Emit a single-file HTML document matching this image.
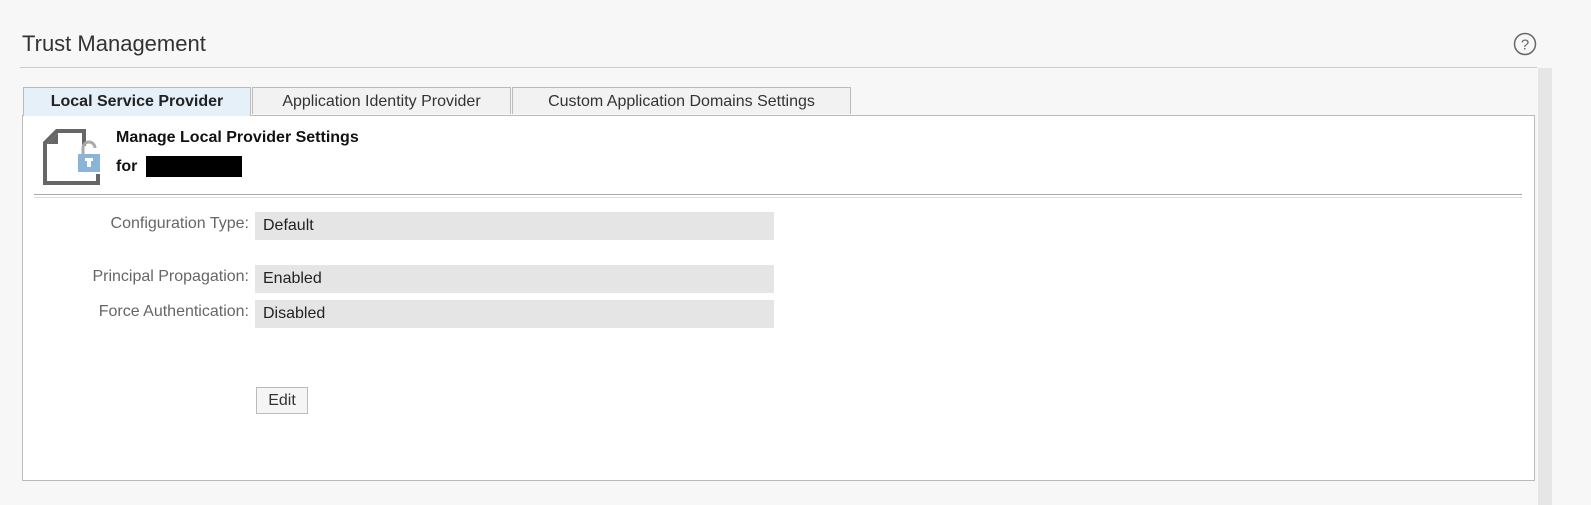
<!DOCTYPE html>
<html><head><style>
body{margin:0;width:1591px;height:505px;background:#f7f7f7;font-family:"Liberation Sans",Arial,sans-serif;position:relative;overflow:hidden}
.a{position:absolute}
.title{left:22px;top:31px;font-size:22px;color:#333}
.hr{left:20px;top:67px;width:1517px;height:1px;background:#ccc}
.scroll{left:1538px;top:68px;width:14px;height:437px;background:#e6e6e6}
.tab{top:87px;height:27px;border:1px solid #bbb;border-bottom:none;background:#f2f2f2;font-size:16px;color:#333;line-height:28px;text-align:center;box-sizing:border-box}
.panel{left:22px;top:115px;width:1513px;height:366px;background:#fff;border:1px solid #bbb;box-sizing:border-box}
.lbl{font-size:16px;color:#666;text-align:right;width:230px;left:19px}
.val{left:255px;width:519px;height:28px;background:#e5e5e5;font-size:16px;color:#222;line-height:28px;padding-left:8px;box-sizing:border-box}
</style></head><body>
<div class="a title">Trust Management</div>
<svg class="a" style="left:1513px;top:32px" width="24" height="24" viewBox="0 0 24 24"><circle cx="12" cy="12" r="10.5" fill="none" stroke="#666" stroke-width="1.5"/><text x="12" y="17.5" font-size="15" text-anchor="middle" fill="#666" font-family="Liberation Sans">?</text></svg>
<div class="a hr"></div>
<div class="a scroll"></div>
<div class="a panel"></div>
<div class="a tab" style="left:23px;width:228px;background:#e6f0f8;font-weight:bold;color:#222;height:29px">Local Service Provider</div>
<div class="a tab" style="left:252px;width:259px">Application Identity Provider</div>
<div class="a tab" style="left:512px;width:339px">Custom Application Domains Settings</div>
<svg class="a" style="left:40px;top:126px" width="64" height="62" viewBox="0 0 64 62">
<path d="M16 3 H46 V20 H42 V7 H18 L7 18 V55 H56 V48 H60 V59 H3 V16 Z" fill="#666"/>
<path d="M7 18 L18 7 V18 Z" fill="#666"/>
<path d="M43 28 V22 a6 6 0 0 1 12 0" fill="none" stroke="#aaa" stroke-width="3"/>
<rect x="38" y="28" width="22" height="18" fill="#8ab4d8"/>
<rect x="47" y="32" width="4" height="9" fill="#fff"/>
<rect x="45" y="32" width="8" height="3" fill="#fff"/>
</svg>
<div class="a" style="left:116px;top:129px;font-size:16px;font-weight:bold;color:#111">Manage Local Provider Settings</div>
<div class="a" style="left:116px;top:158px;font-size:16px;font-weight:bold;color:#111">for</div>
<div class="a" style="left:146px;top:156px;width:96px;height:21px;background:#000"></div>
<div class="a" style="left:34px;top:194px;width:1488px;height:2px;border-top:1px solid #aaa;border-bottom:1px solid #ddd"></div>
<div class="a lbl" style="top:215px">Configuration Type:</div>
<div class="a val" style="top:212px">Default</div>
<div class="a lbl" style="top:268px">Principal Propagation:</div>
<div class="a val" style="top:265px">Enabled</div>
<div class="a lbl" style="top:303px">Force Authentication:</div>
<div class="a val" style="top:300px">Disabled</div>
<div class="a" style="left:256px;top:387px;width:52px;height:27px;border:1px solid #bbb;background:#f5f5f5;box-sizing:border-box;font-size:16px;color:#333;text-align:center;line-height:25px">Edit</div>
</body></html>
